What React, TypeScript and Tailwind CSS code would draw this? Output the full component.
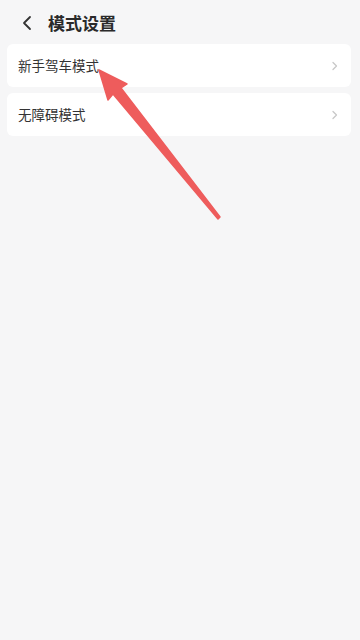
import React from 'react';

const items = ['新手驾车模式', '无障碍模式'];

function App() {
  return (
    <div
      className="relative w-[360px] h-[640px] bg-[#f6f6f7] overflow-hidden"
      style={{ fontFamily: '"Noto Sans CJK SC", "Noto Sans", sans-serif' }}
    >
      <div className="flex items-center h-[44px] pl-[20px] pt-[2px]">
        <svg width="14" height="16" viewBox="0 0 14 16" fill="none">
          <path d="M10 2 L4 8 L10 14" stroke="#333" strokeWidth="1.8" strokeLinecap="round" strokeLinejoin="round" />
        </svg>
        <span className="ml-[14px] text-[17px] font-bold text-[#2a2a2a]">模式设置</span>
      </div>
      <div className="flex flex-col gap-[6px] pl-[7px] pr-[9px]">
        {items.map((item, i) => (
          <div key={i} className="flex items-center justify-between h-[43px] bg-white rounded-[6px] pl-[11px] pr-[12px]">
            <span className="text-[13.5px] text-[#333]">{item}</span>
            <svg width="8" height="10" viewBox="0 0 8 10" fill="none">
              <path d="M2 1.5 L5.5 5 L2 8.5" stroke="#c8c8c8" strokeWidth="1.3" strokeLinecap="round" strokeLinejoin="round" />
            </svg>
          </div>
        ))}
      </div>
      <svg className="absolute left-0 top-0" width="360" height="640" viewBox="0 0 360 640">
        <path d="M218 219 L113 94 L108 100 L99 70 L127 84 L121 88 L220 217 Z" fill="#ee5c5c" stroke="#ee5c5c" strokeWidth="1.5" strokeLinejoin="round" />
      </svg>
    </div>
  );
}

export default App;
